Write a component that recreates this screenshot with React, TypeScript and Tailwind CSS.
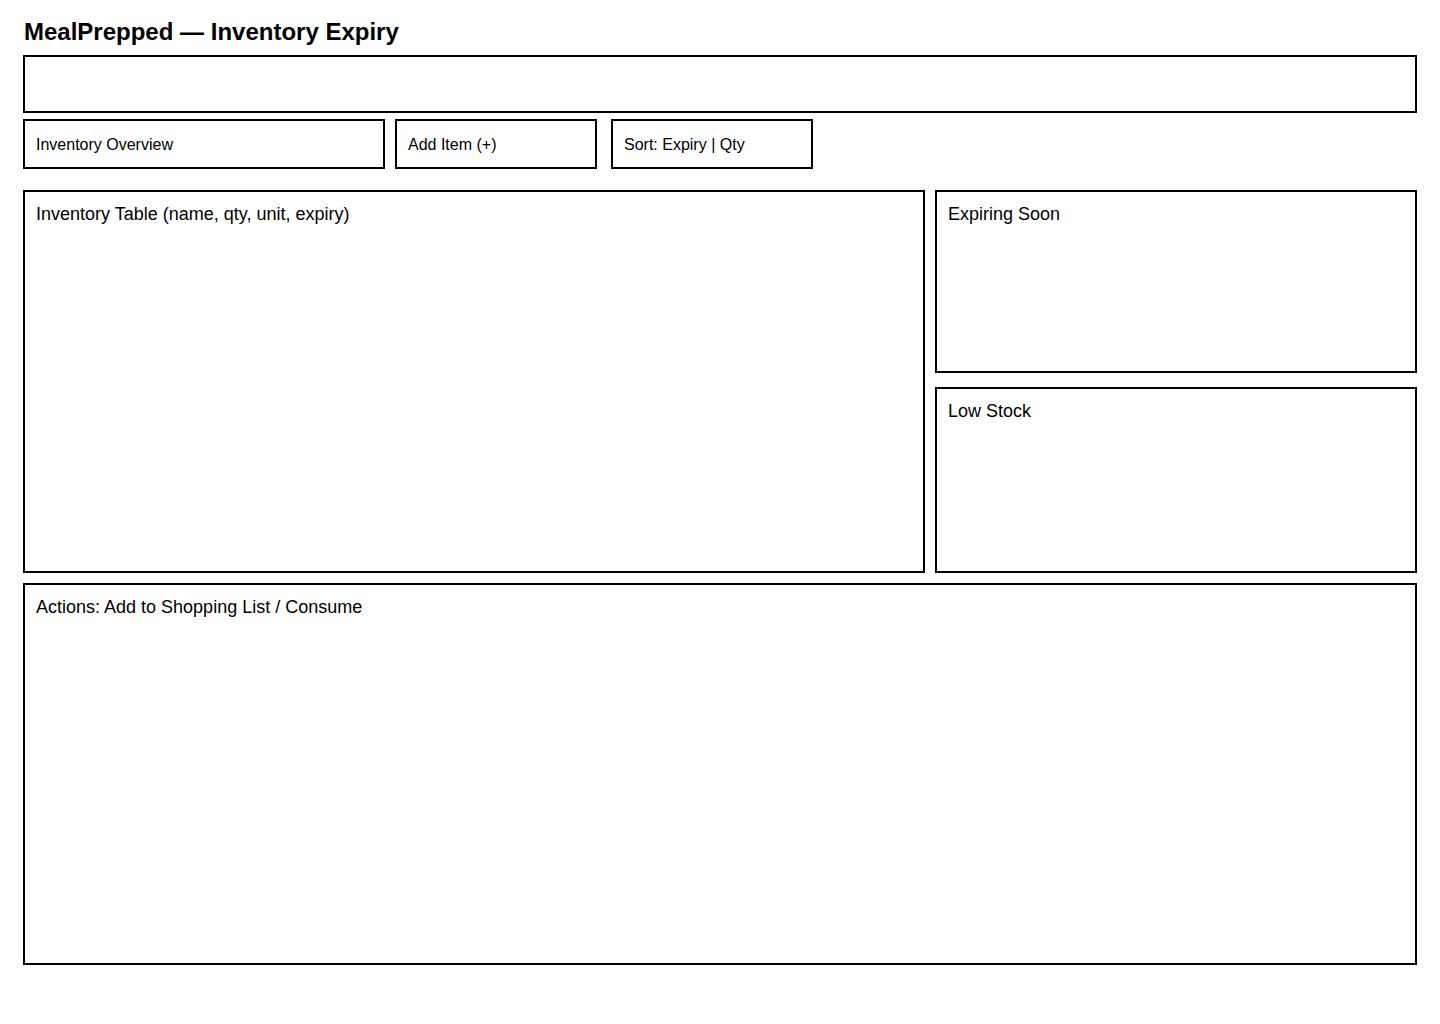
import React from 'react';

function Panel({ label, className }: { label: string; className: string }) {
  return (
    <div className={`border-2 border-black px-[11px] pt-[9px] text-[18px] leading-normal ${className}`}>
      {label}
    </div>
  );
}

export default function App() {
  return (
    <div className="min-h-[1024px] bg-white text-black" style={{ fontFamily: '"Liberation Sans", Arial, sans-serif' }}>
      <div className="ml-[23px] w-[1394px] pt-[14px]">
        <h1 className="ml-px text-[24px] font-bold leading-normal">MealPrepped — Inventory Expiry</h1>

        {/* Search / header bar */}
        <div className="mt-[5px] h-[58px] border-2 border-black" />

        {/* Tabs */}
        <div className="mt-[6px] flex h-[50px] text-[16px]">
          <div className="flex w-[362px] items-center border-2 border-black px-[11px] pt-px">Inventory Overview</div>
          <div className="ml-[10px] flex w-[202px] items-center border-2 border-black px-[11px] pt-px">Add Item (+)</div>
          <div className="ml-[14px] flex w-[202px] items-center border-2 border-black px-[11px] pt-px">Sort: Expiry | Qty</div>
        </div>

        {/* Main content */}
        <div className="mt-[21px] flex h-[383px] gap-[10px]">
          <Panel label="Inventory Table (name, qty, unit, expiry)" className="w-[902px]" />
          <div className="flex flex-1 flex-col gap-[14px]">
            <Panel label="Expiring Soon" className="h-[183px]" />
            <Panel label="Low Stock" className="flex-1" />
          </div>
        </div>

        <Panel label="Actions: Add to Shopping List / Consume" className="mt-[10px] h-[382px]" />
      </div>
    </div>
  );
}
